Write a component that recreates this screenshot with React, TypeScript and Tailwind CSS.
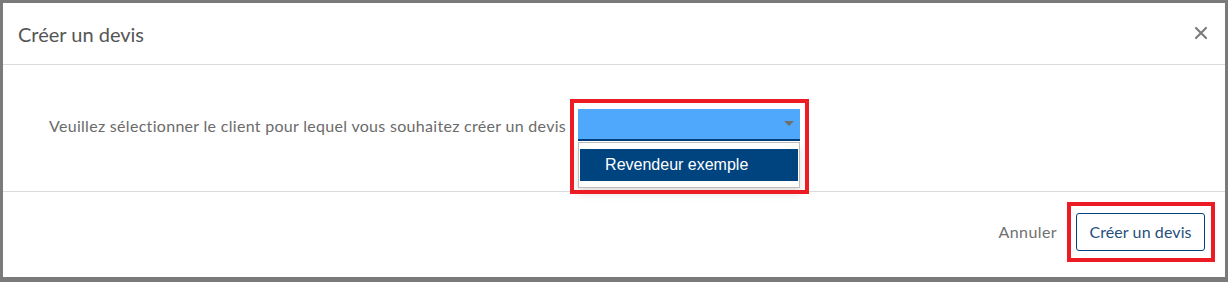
export default function App() {
  const font = { fontFamily: "Lato, 'Noto Sans', sans-serif" };
  return (
    <div className="w-[1228px] h-[282px] bg-[#7a7a7a] pt-[3px] pl-[3px] pr-[3px] pb-[5px]" style={font}>
      <div className="bg-white h-full w-[1222px] flex flex-col">
        <div className="h-[62px] flex items-center justify-between pl-[15px] pr-[17px] border-b border-[#dcdcdc]">
          <h5 className="text-[20px] text-[#555555] leading-none">Créer un devis</h5>
          <svg width="14" height="14" viewBox="0 0 14 14" className="mt-[-2px]">
            <path d="M2 2 L12 12 M12 2 L2 12" stroke="#7d7d7d" strokeWidth="2.2" strokeLinecap="round" />
          </svg>
        </div>
        <div className="h-[127px] flex items-start pl-[46px] pt-[44px] border-b border-[#dcdcdc]">
          <span className="text-[16px] tracking-[0.3px] text-[#6b6b6b] mt-[5px] mr-[12px]">Veuillez sélectionner le client pour lequel vous souhaitez créer un devis</span>
          <div className="relative w-[222px]">
            <div className="h-[32px] bg-[#50a8fd] border-b-[2px] border-[#003f7c] flex items-center justify-end pr-[6px]">
              <svg width="10" height="6" viewBox="0 0 10 6"><path d="M0 0 L10 0 L5 5 Z" fill="#6f6f6f" /></svg>
            </div>
            <div className="absolute left-0 top-[33px] w-[222px] h-[46px] bg-white border border-[#bdbdbd] shadow-[0_6px_8px_rgba(0,0,0,0.12)] px-[1px] pt-[6px]">
              <div className="h-[32px] bg-[#00447f] text-white text-[16px] flex items-center pl-[25px]" style={{ fontFamily: "'Liberation Sans', Arial, sans-serif" }}>
                Revendeur exemple
              </div>
            </div>
            <div className="absolute left-[-8px] top-[-10px] w-[239px] h-[95px] border-[4px] border-[#ed1c24]" />
          </div>
        </div>
        <div className="flex-1 flex items-start justify-end pr-[20px] pt-[21px]">
          <span className="text-[16px] tracking-[0.4px] text-[#707070] mt-[7px] mr-[19px]">Annuler</span>
          <div className="relative">
            <button className="h-[38px] w-[129px] border border-[#00447f] rounded-[3px] text-[16px] tracking-[0.1px] text-[#1f4f7d] flex items-center justify-center">Créer un devis</button>
            <div className="absolute left-[-9px] top-[-11px] w-[148px] h-[60px] border-[4px] border-[#ed1c24]" />
          </div>
        </div>
      </div>
    </div>
  );
}
